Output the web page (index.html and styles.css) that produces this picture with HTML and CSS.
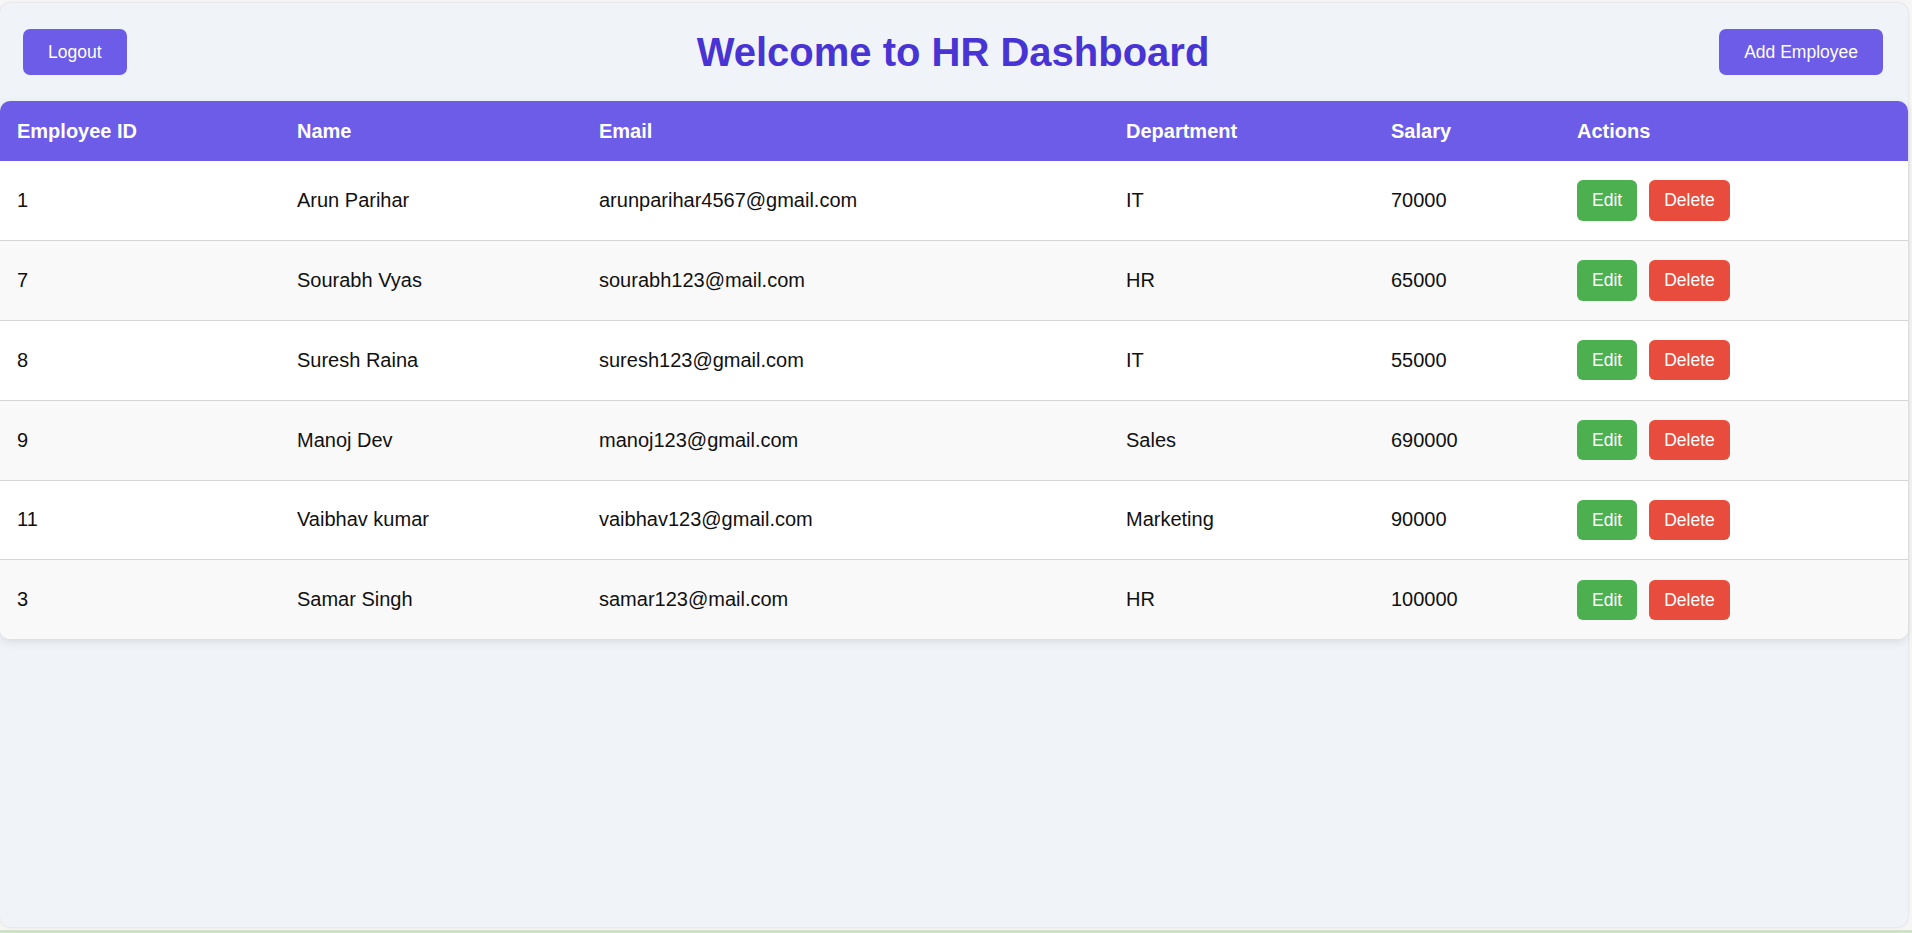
FILE: index.html
```html
<!DOCTYPE html>
<html lang="en">
<head>
<meta charset="utf-8">
<title>HR Dashboard</title>
<link rel="stylesheet" href="styles.css">
</head>
<body>
<div class="app">
  <header class="topbar">
    <div class="left"><button class="btn btn-primary">Logout</button></div>
    <h1 class="title">Welcome to HR Dashboard</h1>
    <div class="right"><button class="btn btn-primary">Add Employee</button></div>
  </header>
  <table class="emp-table">
    <colgroup>
      <col class="c1"><col class="c2"><col class="c3"><col class="c4"><col class="c5"><col class="c6">
    </colgroup>
    <thead>
      <tr><th>Employee ID</th><th>Name</th><th>Email</th><th>Department</th><th>Salary</th><th>Actions</th></tr>
    </thead>
    <tbody>
      <tr><td>1</td><td>Arun Parihar</td><td>arunparihar4567@gmail.com</td><td>IT</td><td>70000</td><td class="actions"><button class="btn btn-edit">Edit</button><button class="btn btn-delete">Delete</button></td></tr>
      <tr><td>7</td><td>Sourabh Vyas</td><td>sourabh123@mail.com</td><td>HR</td><td>65000</td><td class="actions"><button class="btn btn-edit">Edit</button><button class="btn btn-delete">Delete</button></td></tr>
      <tr><td>8</td><td>Suresh Raina</td><td>suresh123@gmail.com</td><td>IT</td><td>55000</td><td class="actions"><button class="btn btn-edit">Edit</button><button class="btn btn-delete">Delete</button></td></tr>
      <tr><td>9</td><td>Manoj Dev</td><td>manoj123@gmail.com</td><td>Sales</td><td>690000</td><td class="actions"><button class="btn btn-edit">Edit</button><button class="btn btn-delete">Delete</button></td></tr>
      <tr><td>11</td><td>Vaibhav kumar</td><td>vaibhav123@gmail.com</td><td>Marketing</td><td>90000</td><td class="actions"><button class="btn btn-edit">Edit</button><button class="btn btn-delete">Delete</button></td></tr>
      <tr><td>3</td><td>Samar Singh</td><td>samar123@mail.com</td><td>HR</td><td>100000</td><td class="actions"><button class="btn btn-edit">Edit</button><button class="btn btn-delete">Delete</button></td></tr>
    </tbody>
  </table>
</div>
<div class="statusline"></div>
</body>
</html>
```
FILE: styles.css
```css
html, body {
  margin: 0;
  padding: 0;
}
body {
  background: #f6f6f6;
  font-family: "Liberation Sans", Arial, sans-serif;
  overflow: hidden;
  height: 933px;
}
.app {
  margin-top: 3px;
  width: 1908px;
  height: 924px;
  background: #f0f3f8;
  border-radius: 10px;
  box-shadow: 0 0 3px rgba(0, 0, 0, 0.14);
  box-sizing: border-box;
}
.topbar {
  display: grid;
  grid-template-columns: 1fr auto 1fr;
  align-items: center;
  padding: 26px 25px 26px 23px;
}
.left { justify-self: start; display: flex; }
.right { justify-self: end; display: flex; }
.title {
  margin: 0;
  font-size: 40px;
  line-height: 46px;
  font-weight: bold;
  color: #4834d4;
  white-space: nowrap;
}
.btn {
  font-family: "Liberation Sans", Arial, sans-serif;
  border: none;
  color: #fff;
  cursor: pointer;
}
.btn-primary {
  background: #6c5ce7;
  font-size: 17.5px;
  line-height: 20px;
  padding: 13px 25px;
  border-radius: 7px;
}
.emp-table {
  width: 1908px;
  border-collapse: collapse;
  table-layout: fixed;
  background: #fff;
  border-radius: 10px;
  overflow: hidden;
  box-shadow: 0 3px 10px rgba(0, 0, 0, 0.1);
}
.c1 { width: 280px; }
.c2 { width: 302px; }
.c3 { width: 527px; }
.c4 { width: 265px; }
.c5 { width: 186px; }
.c6 { width: 348px; }
.emp-table th {
  background: #6c5ce7;
  color: #fff;
  font-size: 20px;
  font-weight: bold;
  line-height: 23px;
  text-align: left;
  padding: 18.5px 17px 18.5px 17px;
}
.emp-table td {
  font-size: 20px;
  line-height: 23px;
  color: #111;
  text-align: left;
  padding: 19.2px 17px;
  border-bottom: 1px solid #d6d6d6;
  white-space: nowrap;
}
.emp-table tbody tr:nth-child(even) td {
  background: #f9f9f9;
}
.emp-table tbody tr:last-child td {
  border-bottom: none;
}
.btn-edit,
.btn-delete {
  font-size: 17.5px;
  line-height: 20.5px;
  padding: 10px 15px;
  border-radius: 6px;
  vertical-align: middle;
}
.btn-edit {
  background: #4caf50;
  margin-right: 12px;
}
.btn-delete {
  background: #e74c3c;
}
.statusline {
  margin-top: 3px;
  height: 3px;
  background: #cfe2c8;
}
```
